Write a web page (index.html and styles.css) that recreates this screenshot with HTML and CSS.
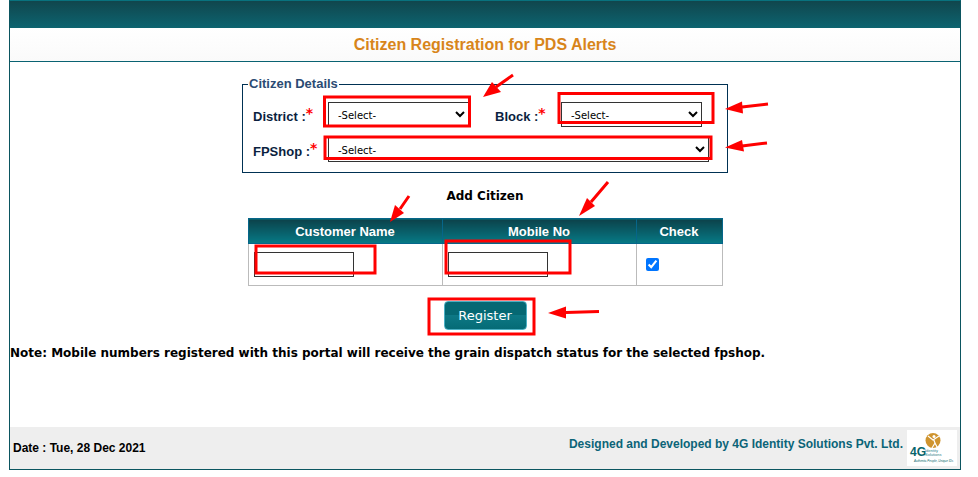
FILE: index.html
```html
<!DOCTYPE html>
<html lang="en">
<head>
<meta charset="utf-8">
<title>Citizen Registration for PDS Alerts</title>
<link rel="stylesheet" href="styles.css">
</head>
<body>
<div id="wrapper">
	<div class="topbar"></div>
	<h1 class="pagetitle">Citizen Registration for PDS Alerts</h1>

	<form class="content" action="#" method="post">
		<div class="formarea">
			<fieldset class="details">
				<legend>Citizen Details</legend>
				<label for="district">District :<span class="req">*</span></label>
				<select id="district"><option>-Select-</option></select>
				<label for="block">Block :<span class="req">*</span></label>
				<select id="block"><option>-Select-</option></select>
				<label for="fpshop">FPShop :<span class="req">*</span></label>
				<select id="fpshop" class="wide"><option>-Select-</option></select>
			</fieldset>

			<h2 class="subtitle">Add Citizen</h2>

			<table class="grid">
				<thead>
				<tr>
					<th class="colname">Customer Name</th>
					<th class="colname">Mobile No</th>
					<th>Check</th>
				</tr>
				</thead>
				<tbody>
				<tr>
					<td><input type="text" class="txt" aria-label="Customer Name"></td>
					<td><input type="text" class="txt" aria-label="Mobile No"></td>
					<td><input type="checkbox" class="chk" aria-label="Check" checked></td>
				</tr>
				</tbody>
			</table>

			<button type="submit" class="btn">Register</button>

			<!-- highlights and pointers over the fields to fill in -->
			<svg class="marks" width="540" height="280" viewBox="0 0 540 280" aria-hidden="true">
				<g fill="none" stroke="#f00" stroke-width="3">
					<rect x="82.5" y="35" width="145" height="29"/>
					<rect x="317" y="31.5" width="154" height="29"/>
					<rect x="83" y="75" width="386" height="21.5"/>
					<rect x="14" y="184" width="119" height="27"/>
					<rect x="204" y="179" width="124" height="32"/>
					<rect x="187" y="237" width="105" height="35"/>
					<path d="M271 13L254 25M526 42L500 45M525 81L500 84M167 134L158 147M366 120L349 140M357 249.500L324 250.500"/>
				</g>
				<g fill="#f00">
					<path d="M241 35L250 20L259 30Z"/>
					<path d="M483 47L500 39.500L501 51.500Z"/>
					<path d="M483 85.500L500 78L502 89.500Z"/>
					<path d="M148 160L153 143L162 151Z"/>
					<path d="M337 154L345 136L353 144Z"/>
					<path d="M306 251L324 244.500L324 256.500Z"/>
				</g>
			</svg>
		</div>
		<p class="note">Note: Mobile numbers registered with this portal will receive the grain dispatch status for the selected fpshop.</p>
	</form>

	<div class="footer">
		<span class="date">Date : Tue, 28 Dec 2021</span>
		<span class="credit">Designed and Developed by 4G Identity Solutions Pvt. Ltd.</span>
		<svg class="logo" width="50" height="36" viewBox="0 0 50 36" role="img" aria-label="4G Identity Solutions">
			<rect width="50" height="36" fill="#fff"/>
			<circle cx="26" cy="10.500" r="7.500" fill="#cf942f"/>
			<circle cx="27" cy="6.500" r="1.500" fill="#fff"/>
			<path d="M21 6L26 10L32 6M26.500 9L28 13L25 18M28 13L30 17" fill="none" stroke="#fff" stroke-width="1.200"/>
			<text x="3" y="26" class="logo4g">4G</text>
			<text x="18" y="22" class="logosmall">Identity</text>
			<text x="18" y="26" class="logosmall">Solutions</text>
			<text x="7" y="32" class="logotag">Authentic People, Unique IDs</text>
		</svg>
	</div>
</div>
</body>
</html>
```
FILE: styles.css
```css
body {
	margin: 0;
	background: #fff;
	font-family: Verdana, "DejaVu Sans", sans-serif;
	font-size: 12px;
	color: #000;
}
#wrapper {
	margin: 0 17px 0 9px;
	border: 1px solid #0b5560;
	border-top: 1px solid #08727e;
}
.topbar {
	height: 27px;
	background: linear-gradient(#10464d, #0d6470);
}
.pagetitle {
	margin: 0;
	height: 33px;
	line-height: 33px;
	border-bottom: 1px solid #0a6272;
	background: linear-gradient(#fff, #fafafa);
	font-family: Arial, "Liberation Sans", sans-serif;
	font-size: 16px;
	text-align: center;
	color: #d8851a;
}
.formarea {
	position: relative;
	width: 486px;
	margin: 0 auto;
	padding-top: 14px;
}
.details {
	display: grid;
	grid-template-columns: 75px 167px 66px 1fr;
	row-gap: 10px;
	align-items: center;
	margin: 0;
	padding: 10px 10px 10px;
	border: 1px solid #003153;
	font-family: Arial, "Liberation Sans", sans-serif;
	font-size: 13px;
	font-weight: bold;
	color: #0b1f3f;
}
.details legend {
	margin-left: -5px;
	padding: 0 1px;
	line-height: 16px;
	color: #2b4b73;
}
.req {
	font-family: Verdana, "DejaVu Sans", sans-serif;
	font-size: 14px;
	line-height: 14px;
	vertical-align: 3px;
	color: #f00;
}
.details select {
	width: 141px;
	height: 25px;
	padding: 1px 0 0 5px;
	border: 1px solid #333;
	border-radius: 0;
	background-color: #fff;
	font-family: Verdana, "DejaVu Sans", sans-serif;
	font-size: 10px;
	color: #000;
}
.details .wide {
	grid-column: 2 / -1;
	width: 381px;
}
.subtitle {
	margin: 15px 0 14px;
	line-height: 16px;
	font-size: 12px;
	text-align: center;
}
.grid {
	width: 475px;
	margin: 0 auto;
	table-layout: fixed;
	border-collapse: collapse;
}
.grid th {
	height: 24px;
	padding: 0;
	border: 1px solid #06668a;
	background: linear-gradient(#0c424a, #067a86);
	font-family: Arial, "Liberation Sans", sans-serif;
	font-size: 13px;
	color: #fff;
}
.grid .colname { width: 193px; }
.grid td {
	height: 41px;
	padding: 0 5px;
	border: 1px solid #bbb;
}
.txt {
	display: block;
	box-sizing: border-box;
	width: 100px;
	height: 25px;
	border: 1px solid #333;
}
.chk {
	display: block;
	margin: 0 4px;
}
.btn {
	display: block;
	width: 83px;
	height: 29px;
	margin: 15px auto;
	padding: 0;
	border: 1px solid #4bb0c4;
	border-radius: 4px;
	background: linear-gradient(#056873 50%, #0d7885 50%, #056b76);
	font-family: Verdana, "DejaVu Sans", sans-serif;
	font-size: 13px;
	color: #fff;
}
.marks {
	position: absolute;
	top: 0;
	left: 0;
	overflow: visible;
	pointer-events: none;
}
.note {
	margin: 0 0 66px;
	line-height: 16px;
	font-weight: bold;
}
.footer {
	display: flex;
	align-items: center;
	height: 42px;
	padding: 0 3px;
	background: #eee;
	font-family: Arial, "Liberation Sans", sans-serif;
	font-size: 12px;
	font-weight: bold;
}
.credit {
	margin: 0 4px 8px auto;
	color: #0b6478;
}
.logo4g {
	font: bold 12px "Liberation Sans", Arial, sans-serif;
	fill: #06646b;
}
.logosmall {
	font: 4px "Liberation Sans", Arial, sans-serif;
	fill: #2d8188;
}
.logotag {
	font: italic 3px "Liberation Sans", Arial, sans-serif;
	fill: #06646b;
}
```
